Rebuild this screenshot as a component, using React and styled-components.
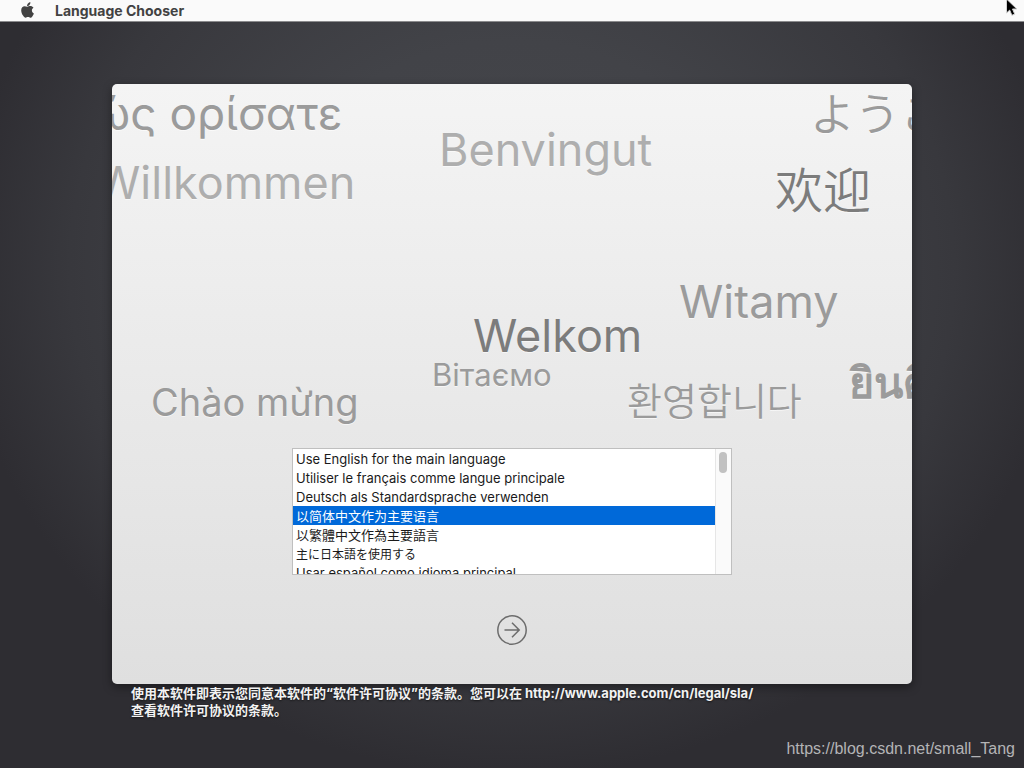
import React, { useState } from "react";
import styled, { createGlobalStyle } from "styled-components";

const GlobalStyle = createGlobalStyle`
  *, *::before, *::after { box-sizing: border-box; }
  html, body, #root { min-height: 100vh; }
  body {
    margin: 0;
    font-family: Inter, "Noto Sans CJK SC", sans-serif;
    background: #2d2c31;
  }
`;

const Desktop = styled.div`
  position: relative;
  min-height: 100vh;
  display: flex;
  flex-direction: column;
  overflow: hidden;
  background: radial-gradient(ellipse 54% 66% at 50% 35%, #46474c 0%, #424348 45%, #38383d 80%, #2e2d32 100%);
`;

const MenuBar = styled.header`
  display: flex;
  align-items: center;
  gap: 20px;
  height: 22px;
  padding: 0 20px;
  background: #fafafa;
  border-bottom: 1px solid #8b8b8d;
  color: #424242;
`;

const AppName = styled.h1`
  margin: 0;
  font-size: 14px;
  line-height: 22px;
  font-weight: 700;
`;

const Pointer = styled.svg`
  position: absolute;
  top: -2px;
  right: 4px;
`;

const Main = styled.main`
  width: 100%;
  max-width: 800px;
  margin: 62px auto 0;
`;

const Card = styled.section`
  display: flex;
  flex-direction: column;
  align-items: center;
  padding-bottom: 38px;
  border-radius: 5px;
  overflow: hidden;
  background: linear-gradient(#f4f4f4, #dfdfdf);
`;

const CardShadow = styled.div`
  border-radius: 5px;
  box-shadow: 0 3px 10px rgba(0, 0, 0, 0.4);
`;

const Greetings = styled.div`
  position: relative;
  align-self: stretch;
  height: 364px;
`;

const Greeting = styled.span`
  position: absolute;
  left: ${(p) => p.$x}px;
  top: ${(p) => p.$y}px;
  font-size: ${(p) => p.$size}px;
  line-height: 60px;
  color: ${(p) => p.$tone};
  font-family: ${(p) => p.$font || 'Inter, sans-serif'};
  font-weight: ${(p) => p.$weight || 400};
  text-shadow: 0 1px 0 rgba(255, 255, 255, 0.6);
  white-space: nowrap;
`;

const ListFrame = styled.div`
  display: flex;
  width: 440px;
  max-width: 100%;
  height: 127px;
  border: 1px solid #bfbfbf;
  background: #fff;
`;

const LanguageList = styled.select`
  flex: 1;
  min-width: 0;
  height: 125px;
  padding: 0;
  border: 0;
  border-radius: 0;
  outline: none;
  background: #fff;
  font-family: Inter, "Noto Sans CJK SC", sans-serif;
  font-size: 13px;
  overflow-y: scroll;
  scrollbar-width: none;
`;

const Language = styled.option`
  display: flex;
  align-items: center;
  height: 19px;
  min-height: 19px;
  padding: ${(p) => (p.$font ? "0 3px 1px" : "1px 3px 0")};
  font-size: ${(p) => p.$size || 13}px;
  font-family: ${(p) => p.$font || 'Inter, sans-serif'};
  color: #1a1a1a;

  &:checked {
    background: #0069d9 linear-gradient(#0069d9, #0069d9);
    color: #fff;
    -webkit-text-fill-color: #fff;
  }
`;

const ScrollTrack = styled.div`
  width: 16px;
  padding: 3px;
  border-left: 1px solid #e6e6e6;
  background: #fafafa;
`;

const ScrollThumb = styled.div`
  width: 8px;
  height: 21px;
  border-radius: 4px;
  background: #c1c1c1;
`;

const ContinueButton = styled.button`
  display: flex;
  margin-top: 39px;
  padding: 0;
  border: 0;
  background: none;
  color: #6c6c6c;
`;

const Legal = styled.p`
  margin: 0;
  padding: 1px 19px;
  color: #f2f2f2;
  font-size: 13px;
  line-height: 17px;
  font-weight: 700;
  font-family: Inter, "Noto Sans CJK SC", sans-serif;
  text-shadow: 0 1px 2px rgba(0, 0, 0, 0.6);
`;

const LegalLink = styled.a`
  color: inherit;
  text-decoration: none;
`;

const Watermark = styled.footer`
  margin-top: auto;
  padding: 0 9px 9px;
  text-align: right;
  color: #b4b4b6;
  font-family: "Liberation Sans", sans-serif;
  font-size: 16px;
  line-height: 20px;
`;

const light = "#aeaeae";
const mid = "#9b9b9b";
const dark = "#7c7c7c";

const greetings = [
  { text: "Καλώς ορίσατε", x: -106, y: -1, size: 46, tone: mid },
  { text: "Willkommen", x: -16, y: 69, size: 45, tone: light },
  { text: "Benvingut", x: 327, y: 36, size: 45, tone: light },
  { text: "ようこそ", x: 698, y: -2, size: 45, tone: mid, font: '"Noto Sans CJK JP", sans-serif', weight: 350 },
  { text: "欢迎", x: 663, y: 73, size: 48, tone: dark, font: '"Noto Sans CJK SC", sans-serif', weight: 350 },
  { text: "Witamy", x: 567, y: 188, size: 45, tone: mid },
  { text: "Welkom", x: 361, y: 222, size: 45, tone: dark },
  { text: "Вітаємо", x: 320, y: 261, size: 31, tone: mid },
  { text: "Chào mừng", x: 39, y: 288, size: 38, tone: mid },
  { text: "환영합니다", x: 515, y: 285, size: 38, tone: mid, font: '"Noto Sans CJK KR", sans-serif', weight: 350 },
  { text: "ยินดีต้อนรับ", x: 737, y: 268, size: 43, tone: mid, weight: 600 },
];

const languages = [
  { code: "en", label: "Use English for the main language" },
  { code: "fr", label: "Utiliser le français comme langue principale" },
  { code: "de", label: "Deutsch als Standardsprache verwenden" },
  { code: "zh-Hans", label: "以简体中文作为主要语言", font: '"Noto Sans CJK SC", sans-serif' },
  { code: "zh-Hant", label: "以繁體中文作為主要語言", font: '"Noto Sans CJK TC", sans-serif' },
  { code: "ja", label: "主に日本語を使用する", font: '"Noto Sans CJK JP", sans-serif', size: 12 },
  { code: "es", label: "Usar español como idioma principal" },
];

function AppleLogo() {
  return (
    <svg width="15" height="17" viewBox="0 0 15 17" fill="currentColor" aria-hidden="true">
      <path d="M10.4 0.3c.1 1-.3 1.900-.9 2.600-.6.700-1.500 1.200-2.400 1.100-.1-.9.300-1.900.900-2.500.600-.700 1.600-1.200 2.400-1.200z" />
      <path d="M13.500 5.800c-1 .6-1.600 1.500-1.600 2.700 0 1.400.8 2.400 2 2.900-.3.900-.7 1.700-1.300 2.500-.6.900-1.200 1.800-2.200 1.800-1 0-1.300-.6-2.400-.6s-1.500.6-2.400.6c-1 0-1.700-.9-2.400-1.900C1.800 11.900 1.200 9.800 1.200 8.200c0-2.600 1.700-4 3.400-4 .9 0 1.700.6 2.600.6.800 0 1.900-.7 3-.7 1.300 0 2.500.6 3.300 1.700z" />
    </svg>
  );
}

export default function App() {
  const [language, setLanguage] = useState("zh-Hans");

  return (
    <Desktop>
      <GlobalStyle />
      <MenuBar>
        <AppleLogo />
        <AppName>Language Chooser</AppName>
      </MenuBar>
      <Pointer width="15" height="20" viewBox="0 0 15 20" aria-hidden="true">
        <path
          d="M1.500 1v14l3.200-2.900 2.200 5.200 2.800-1.200-2.200-5.100h4.400z"
          fill="#000"
          stroke="#d0d0d0"
          strokeWidth="1"
        />
      </Pointer>

      <Main>
        <CardShadow>
          <Card>
            <Greetings>
              {greetings.map((g) => (
                <Greeting key={g.text} $x={g.x} $y={g.y} $size={g.size} $tone={g.tone} $font={g.font} $weight={g.weight}>
                  {g.text}
                </Greeting>
              ))}
            </Greetings>
            <ListFrame>
              <LanguageList
                size={6}
                aria-label="Language"
                value={language}
                onChange={(e) => setLanguage(e.target.value)}
              >
                {languages.map((l) => (
                  <Language key={l.code} value={l.code} $font={l.font} $size={l.size}>
                    {l.label}
                  </Language>
                ))}
              </LanguageList>
              <ScrollTrack>
                <ScrollThumb />
              </ScrollTrack>
            </ListFrame>
            <ContinueButton type="button" aria-label="Continue">
              <svg width="32" height="32" viewBox="0 0 32 32" fill="none" stroke="currentColor" strokeWidth="1.500">
                <circle cx="16" cy="16" r="14.200" />
                <path d="M8.500 16h14.500M16 8.800l7.200 7.200-7.200 7.200" />
              </svg>
            </ContinueButton>
          </Card>
        </CardShadow>
        <Legal>
          使用本软件即表示您同意本软件的“软件许可协议”的条款。您可以在{" "}
          <LegalLink href="http://www.apple.com/cn/legal/sla/">http://www.apple.com/cn/legal/sla/</LegalLink>
          <br />
          查看软件许可协议的条款。
        </Legal>
      </Main>

      <Watermark>https://blog.csdn.net/small_Tang</Watermark>
    </Desktop>
  );
}
